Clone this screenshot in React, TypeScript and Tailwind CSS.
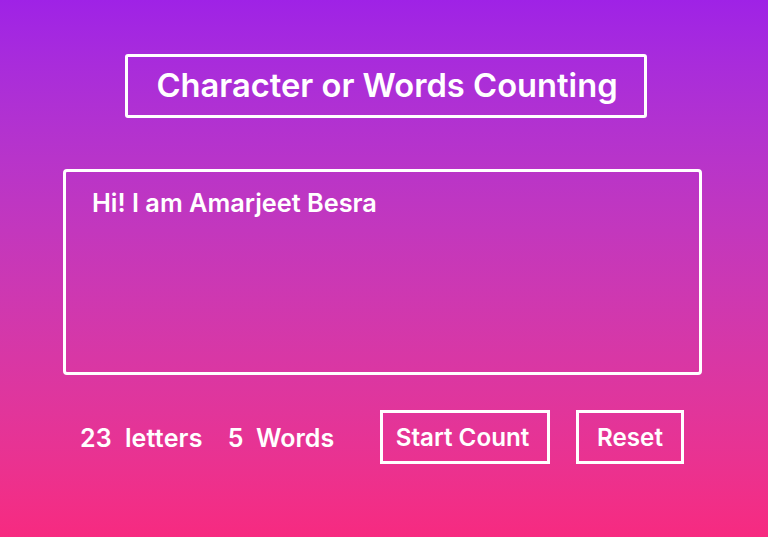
import React from "react";

export default function App() {
  return (
    <div className="w-[768px] h-[537px] bg-gradient-to-b from-[#9f22e6] to-[#f72a80] relative overflow-hidden" style={{ fontFamily: "Inter, 'Noto Sans', sans-serif" }}>
      <div className="pt-[54px] pl-[125px]">
        <div className="w-[522px] h-[64px] border-[3px] border-white rounded-[3px] flex items-center justify-center">
          <h1 className="text-white text-[32.7px] font-semibold pl-[2px]">Character or Words Counting</h1>
        </div>
      </div>
      <div className="ml-[63px] mt-[51px] w-[639px] h-[206px] border-[3px] border-white rounded-[4px] pl-[26px] pt-[12px]">
        <p className="text-white text-[25.3px] font-semibold">Hi! I am Amarjeet Besra</p>
      </div>
      <div className="flex items-center mt-[35px] ml-[80px]">
        <span className="text-white text-[25px] font-semibold tracking-[0.2px] pt-[3px]">23&nbsp; letters</span>
        <span className="text-white text-[25px] font-semibold ml-[25px] pt-[3px]">5&nbsp; Words</span>
        <div className="flex-1" />
        <button className="w-[170px] h-[54px] border-[3px] border-white text-white text-[24.2px] font-semibold pt-[2px] pr-[5px]">Start Count</button>
        <button className="ml-[26px] mr-[84px] w-[108px] h-[54px] border-[3px] border-white text-white text-[24.2px] font-semibold pt-[2px]">Reset</button>
      </div>
    </div>
  );
}
